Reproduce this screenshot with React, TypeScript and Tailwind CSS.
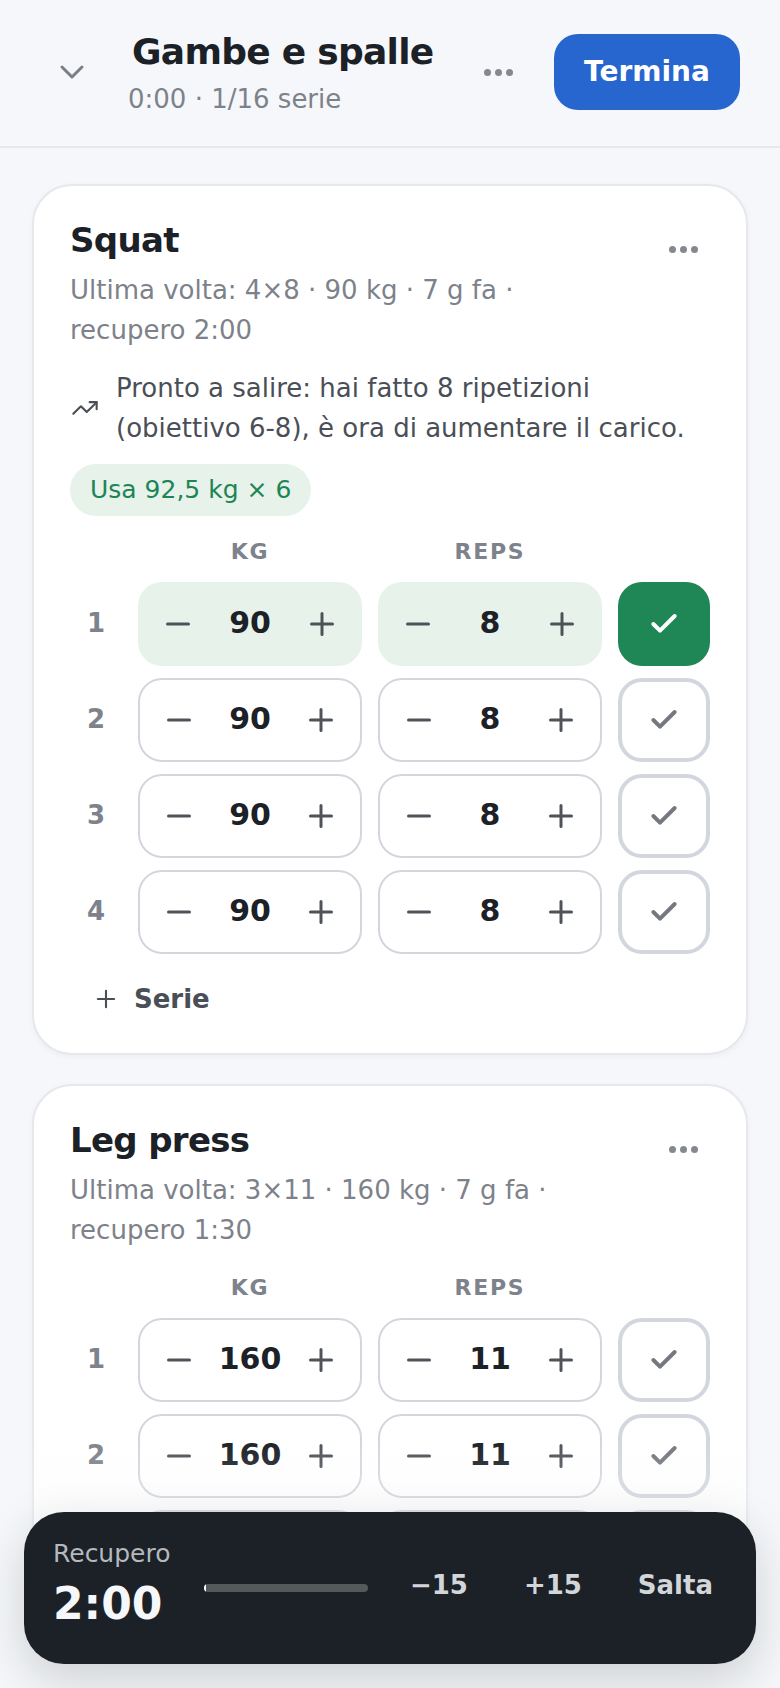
import { Check, ChevronDown, Minus, Plus, TrendingUp } from 'lucide-react';

type SetRow = { kg: number; reps: number; done?: boolean };

const squatSets: SetRow[] = [
  { kg: 90, reps: 8, done: true },
  { kg: 90, reps: 8 },
  { kg: 90, reps: 8 },
  { kg: 90, reps: 8 },
];

const legPressSets: SetRow[] = [
  { kg: 160, reps: 11 },
  { kg: 160, reps: 11 },
  { kg: 160, reps: 11 },
];

export default function App() {
  return (
    <main className="relative h-[1688px] w-[780px] overflow-hidden bg-[#f5f7fa] font-['DejaVu_Sans',sans-serif]">
      <header className="flex h-[148px] items-center border-b-2 border-[#e6e8eb] pb-[2px] pl-[32px] pr-[40px]">
        <button className="flex w-[80px] items-center justify-center text-[#7a7f87]">
          <ChevronDown size={40} strokeWidth={1.8} />
        </button>
        <div className="ml-[16px] mt-[2px] flex-1">
          <h1 className="ml-[4px] text-[36px] font-bold leading-[50px] tracking-[-0.02em] text-[#1b2126]">Gambe e spalle</h1>
          <p className="mt-[2px] text-[26px] leading-[40px] text-[#7d828a]">0:00 · 1/16 serie</p>
        </div>
        <Dots className="mr-[20px] w-[72px]" />
        <button className="h-[76px] w-[186px] rounded-[24px] bg-[#2766cf] text-[28px] font-bold text-white">Termina</button>
      </header>

      <div className="flex flex-col gap-[29px] px-[32px] pt-[36px]">
        <ExerciseCard
          name="Squat"
          lastTime="Ultima volta: 4×8 · 90 kg · 7 g fa ·"
          rest="recupero 2:00"
          sets={squatSets}
          hint
          addSet
        />
        <ExerciseCard
          name="Leg press"
          lastTime="Ultima volta: 3×11 · 160 kg · 7 g fa ·"
          rest="recupero 1:30"
          sets={legPressSets}
        />
      </div>

      <div className="absolute inset-x-0 bottom-0 h-[250px] bg-gradient-to-t from-[#f5f7fa]/90 to-transparent" />

      <div className="absolute inset-x-[24px] bottom-[24px] flex h-[152px] items-center rounded-[40px] bg-[#1b2126] pl-[29px] pr-[43px] shadow-[0_16px_48px_rgba(27,33,38,0.18)]">
        <div className="w-[151px] pb-[8px]">
          <div className="text-[25px] leading-[40px] text-[#b5b9bd]">Recupero</div>
          <div className="text-[44px] font-bold leading-[60px] text-[#f5f7fa]">2:00</div>
        </div>
        <div className="h-[8px] w-[164px] overflow-hidden rounded-full bg-[#55595c]">
          <div className="h-full w-[2px] bg-white" />
        </div>
        <div className="ml-auto flex items-center gap-[56px] pb-[6px] text-[26px] font-bold text-[#d2d5d9]">
          <button>−15</button>
          <button>+15</button>
          <button>Salta</button>
        </div>
      </div>
    </main>
  );
}

function Dots({ className }: { className?: string }) {
  return (
    <div className={`flex items-center justify-center gap-[4px] ${className ?? ''}`}>
      <span className="h-[7px] w-[7px] rounded-full bg-[#85898f]" />
      <span className="h-[7px] w-[7px] rounded-full bg-[#85898f]" />
      <span className="h-[7px] w-[7px] rounded-full bg-[#85898f]" />
    </div>
  );
}

function ExerciseCard({
  name,
  lastTime,
  rest,
  sets,
  hint,
  addSet,
}: {
  name: string;
  lastTime: string;
  rest: string;
  sets: SetRow[];
  hint?: boolean;
  addSet?: boolean;
}) {
  return (
    <section className="rounded-[40px] border-2 border-[#e6e8eb] bg-white px-[36px] pb-[34px] pt-[29px] shadow-[0_2px_6px_rgba(27,33,38,0.04)]">
      <div className="flex items-start justify-between">
        <div>
          <h2 className="text-[34px] font-bold leading-[50px] tracking-[-0.02em] text-[#1b2126]">{name}</h2>
          <p className="mt-[5px] text-[26px] leading-[40px] text-[#7d828a]">
            {lastTime}
            <br />
            {rest}
          </p>
        </div>
        <Dots className="mt-[31px] w-[54px]" />
      </div>

      {hint && (
        <>
          <div className="mt-[18px] flex items-center gap-[17px] pl-[1px] text-[26px] leading-[40px] text-[#4a4f57]">
            <TrendingUp size={28} strokeWidth={1.8} className="shrink-0" />
            <p>
              Pronto a salire: hai fatto 8 ripetizioni
              <br />
              (obiettivo 6-8), è ora di aumentare il carico.
            </p>
          </div>
          <div className="mt-[16px] inline-flex h-[52px] items-center rounded-full bg-[#e6f2ea] px-[20px] text-[25px] text-[#1d8555]">
            Usa 92,5 kg × 6
          </div>
        </>
      )}

      <div className={`grid grid-cols-[52px_224px_224px_92px] gap-x-[16px] text-[22px] font-bold leading-[30px] tracking-[0.08em] text-[#7d828c] ${hint ? 'mt-[21px]' : 'mt-[23px]'}`}>
        <span />
        <span className="text-center">KG</span>
        <span className="text-center">REPS</span>
        <span />
      </div>

      <div className="mt-[15px] flex flex-col gap-[12px]">
        {sets.map((set, i) => (
          <div key={i} className="grid grid-cols-[52px_224px_224px_92px] items-center gap-x-[16px]">
            <span className="pb-[1px] text-center text-[26px] font-bold text-[#7d828c]">{i + 1}</span>
            <Stepper value={set.kg} done={set.done} />
            <Stepper value={set.reps} done={set.done} />
            <button
              className={
                set.done
                  ? 'flex h-[84px] items-center justify-center rounded-[24px] bg-[#1f8655] text-white'
                  : 'flex h-[84px] items-center justify-center rounded-[24px] border-4 border-[#d3d6df] bg-white text-[#75787f]'
              }
            >
              <Check size={32} strokeWidth={3} />
            </button>
          </div>
        ))}
      </div>

      {addSet && (
        <button className="ml-[22px] mt-[25px] flex items-center gap-[14px] text-[26px] font-bold leading-[40px] text-[#4a4f57]">
          <Plus size={28} strokeWidth={1.8} />
          Serie
        </button>
      )}
    </section>
  );
}

function Stepper({ value, done }: { value: number; done?: boolean }) {
  return (
    <div
      className={
        done
          ? 'flex h-[84px] items-center justify-between rounded-[24px] bg-[#e6f2ea] text-[#1b2126]'
          : 'flex h-[84px] items-center justify-between rounded-[24px] border-2 border-[#d4d6dd] bg-white text-[#1b2126]'
      }
    >
      <button className={done ? 'flex w-[80px] justify-center text-[#4e535b]' : 'flex w-[78px] justify-center text-[#4e535b]'}>
        <Minus size={36} />
      </button>
      <span className="pb-[4px] text-[30px] font-bold">{value}</span>
      <button className={done ? 'flex w-[80px] justify-center text-[#4e535b]' : 'flex w-[78px] justify-center text-[#4e535b]'}>
        <Plus size={36} />
      </button>
    </div>
  );
}
